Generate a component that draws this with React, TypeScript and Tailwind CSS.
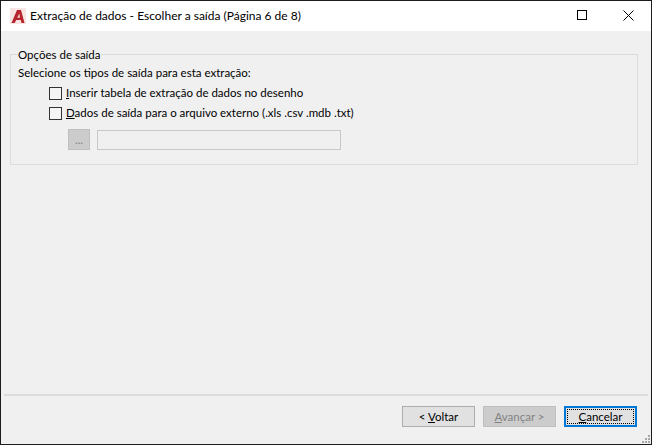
const font = "font-['Lato','Roboto',sans-serif]";

const AppIcon = () => (
  <svg width="16" height="16" viewBox="0 0 16 16" className="shrink-0">
    <rect x="0" y="0" width="16" height="16" fill="#f8e4e2" />
    <path d="M1.500 15 7 2h4l3.500 13h-3l-.7-3H6.200l-1.500 3Z" fill="#b5242c" />
    <path d="M7.200 9.800h3l-.9-4.300Z" fill="#f3c9c7" />
  </svg>
);

const Check = ({ label, mark }: { label: string; mark: string }) => (
  <label className="flex items-center h-5 pl-[31px]">
    <span className="w-[13px] h-[13px] border border-[#333] bg-[#f4f4f4] mr-1 shrink-0" />
    <span>
      <span className="underline">{mark}</span>
      {label}
    </span>
  </label>
);

const Btn = ({ children, kind }: { children: React.ReactNode; kind?: "off" | "focus" }) => {
  if (kind === "focus") {
    return (
      <button className="w-[73px] h-[21px] bg-[#e1e1e1] border-2 border-[#0078d7] flex items-center justify-center p-px">
        <span className="w-full h-full border border-dotted border-black flex items-center justify-center">
          {children}
        </span>
      </button>
    );
  }
  return (
    <button
      className={
        kind === "off"
          ? "w-[73px] h-[21px] bg-[#cccccc] border border-[#bfbfbf] text-[#838383] flex items-center justify-center"
          : "w-[73px] h-[21px] bg-[#e1e1e1] border border-[#adadad] flex items-center justify-center"
      }
    >
      {children}
    </button>
  );
};

export default function App() {
  return (
    <div className={`w-[652px] h-[445px] flex flex-col bg-[#f0f0f0] border border-[#1c1c1c] text-[11.5px] leading-4 text-black overflow-hidden ${font}`}>
      <div className="h-[30px] bg-white flex items-center pl-[9px] shrink-0 text-[12px]">
        <AppIcon />
        <span className="ml-[4px] flex-1">Extração de dados - Escolher a saída (Página 6 de 8)</span>
        <svg width="10" height="10" viewBox="0 0 10 10" className="mr-[36px] -mt-[2px]">
          <rect x="0.500" y="0.500" width="9" height="9" fill="none" stroke="#000" />
        </svg>
        <svg width="11" height="11" viewBox="0 0 11 11" className="mr-[17px] -mt-[2px]">
          <path d="M0.500 0.500 10.500 10.500M10.500 0.500 0.500 10.500" stroke="#000" fill="none" />
        </svg>
      </div>

      <div className="flex-1 flex flex-col min-h-0">
        <div className="relative mt-[23px] ml-[9px] mr-[13px] h-[111px] border border-[#dcdcdc] pl-[7px] pt-[8px]">
          <span className="absolute left-[7px] -top-[8px] bg-[#f0f0f0]">Opções de saída</span>
          <p className="leading-5">Selecione os tipos de saída para esta extração:</p>
          <Check mark="I" label="nserir tabela de extração de dados no desenho" />
          <Check mark="D" label="ados de saída para o arquivo externo (.xls .csv .mdb .txt)" />
          <div className="flex items-end mt-[6px] pl-[50px]">
            <button className="w-[22px] h-[21px] bg-[#cccccc] border border-[#bfbfbf] text-[#838383] leading-3">...</button>
            <div className="w-[244px] h-5 ml-[7px] bg-[#f0f0f0] border border-[#c8c8c8]" />
          </div>
        </div>

        <div className="mt-auto border-t-2 border-[#dcdcdc] mx-[3px]" />
        <div className="relative h-[48px] shrink-0 flex justify-end gap-2 pt-[10px] pr-[14px]">
          <Btn>
            <span>
              &lt; <span className="underline">V</span>oltar
            </span>
          </Btn>
          <Btn kind="off">
            <span>
              <span className="underline">A</span>vançar &gt;
            </span>
          </Btn>
          <Btn kind="focus">
            <span>
              <span className="underline">C</span>ancelar
            </span>
          </Btn>
          <svg width="10" height="10" viewBox="0 0 10 10" className="absolute right-0 bottom-0">
            <g fill="#a8a8a8">
              <rect x="7" y="1" width="2" height="2" />
              <rect x="4" y="4" width="2" height="2" />
              <rect x="7" y="4" width="2" height="2" />
              <rect x="1" y="7" width="2" height="2" />
              <rect x="4" y="7" width="2" height="2" />
              <rect x="7" y="7" width="2" height="2" />
            </g>
          </svg>
        </div>
      </div>
    </div>
  );
}
